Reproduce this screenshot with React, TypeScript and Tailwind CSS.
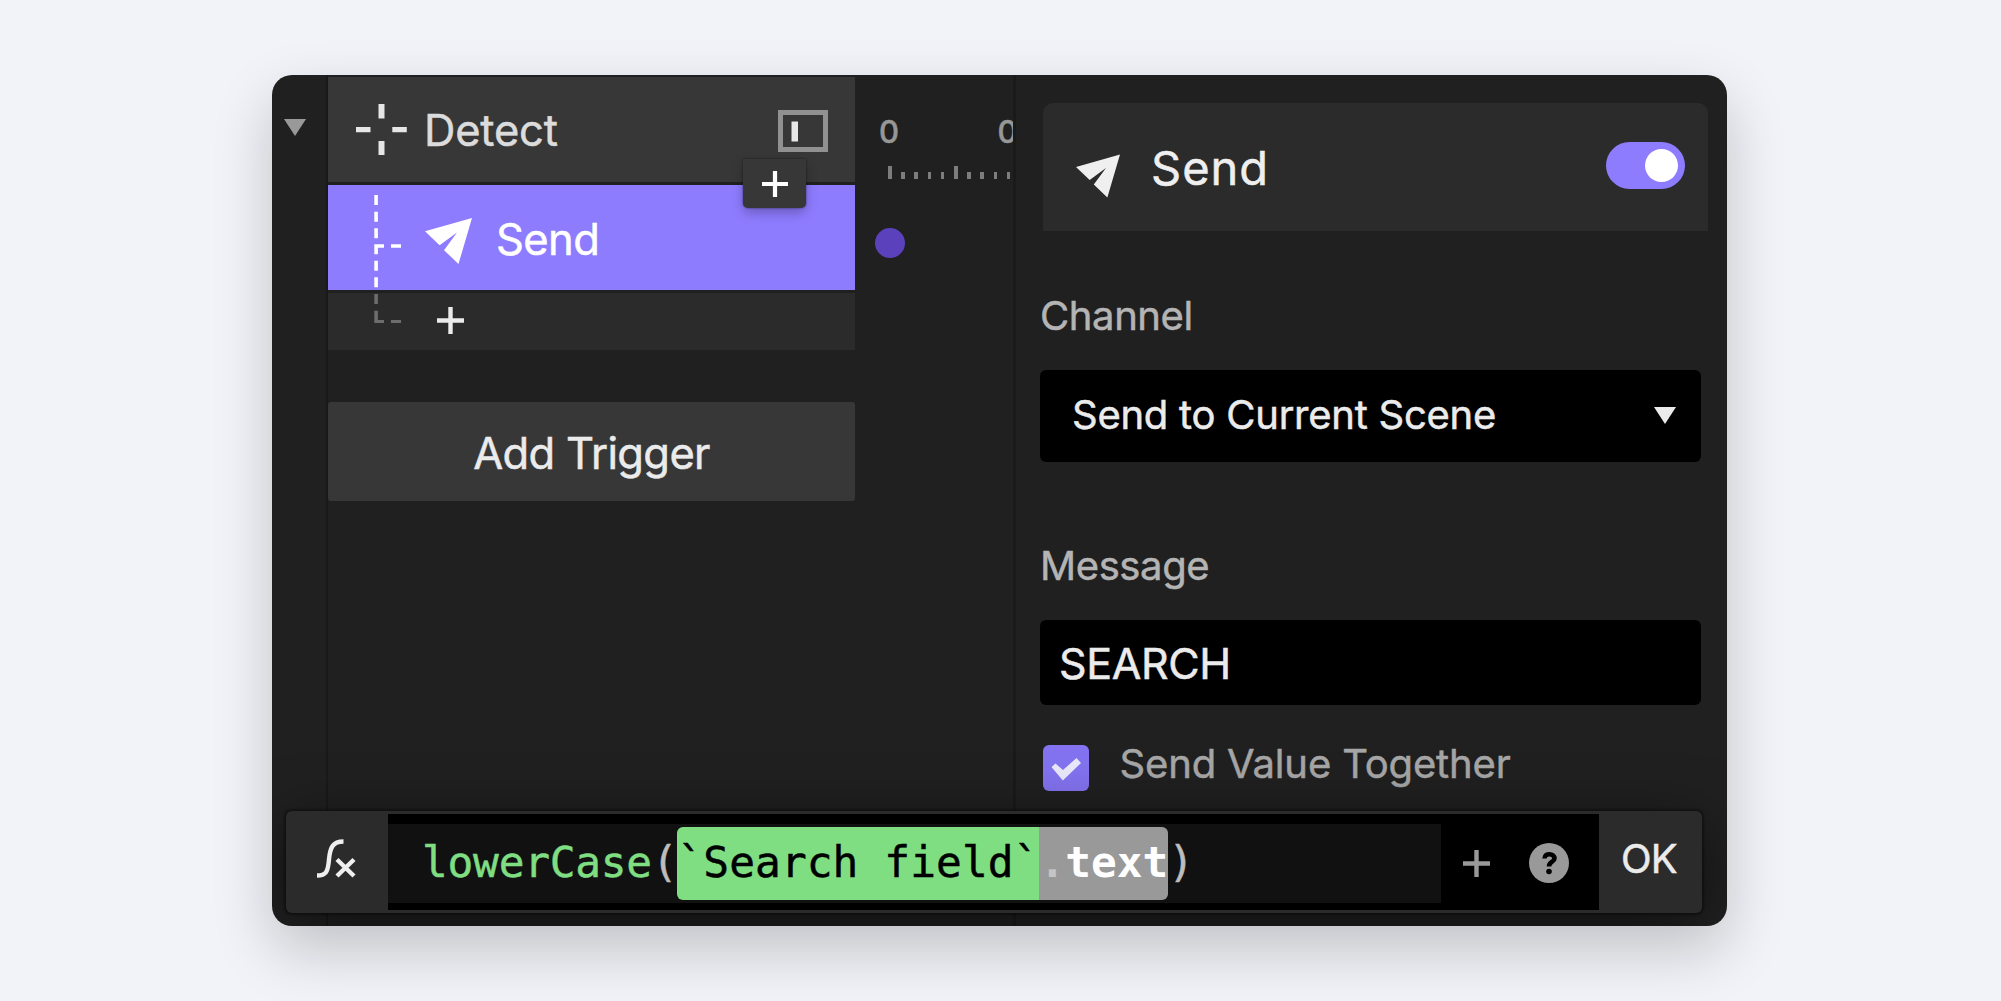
import type { ReactNode } from 'react'

const ticks = [0, 1, 2, 3, 4, 5, 6, 7, 8, 9]

function Plane({ className }: { className: string }) {
  return (
    <svg viewBox="0 0 47 46" className={className} fill="currentColor">
      <path d="M0 13.3 47 0 33.5 46 19 32.2 32 14.4 14.6 27.2Z" />
    </svg>
  )
}

function Plus({ className, width = 4.4 }: { className: string; width?: number }) {
  return (
    <svg viewBox="0 0 27 27" className={className} stroke="currentColor" strokeWidth={width}>
      <path d="M13.5 0V27M0 13.5H27" />
    </svg>
  )
}

function Caret({ className }: { className: string }) {
  return (
    <svg viewBox="0 0 22 17" className={className} fill="currentColor">
      <path d="M0 0H22L11 17Z" />
    </svg>
  )
}

function Label({ children }: { children: ReactNode }) {
  return <div className="text-[40px] leading-[40px] tracking-[-0.4px] text-[#b4b4b4]">{children}</div>
}

function Branches() {
  return (
    <svg viewBox="0 0 28 130" className="absolute left-[46px] top-[118px] w-[28px] h-[130px]">
      <path
        fill="#fff"
        d="M.3 2h3.6v10H.3zM.3 18.7h3.6v10H.3zM.3 35.3h3.6v10H.3zM.3 51.3h9.7v3.5H3.9v6.5H.3zM17 51.3h10v3.5H17zM.3 67.7h3.6v10H.3zM.3 84.3h3.6v10H.3z"
      />
      <path fill="#6d6d6d" d="M.3 101h3.6v10H.3zM.3 117.7h3.6v9.3H10v3.3H.3zM17 127h10v3.3H17z" />
    </svg>
  )
}

function Triggers() {
  return (
    <div className="relative w-[527px] pt-[2px]">
      <div className="flex h-[105px] bg-[#373737]">
        <svg viewBox="0 0 51 51" className="ml-[28px] mt-[27px] w-[51px] h-[51px]" fill="#e6e6e6">
          <path d="M22.5 0h6v14.5h-6zM22.5 37h6v14h-6zM0 23h14.5v5.3H0zM36.3 23h14.5v5.3H36.3z" />
        </svg>
        <div className="ml-[17px] mt-[32px] text-[43.5px] leading-[43.5px] tracking-[-0.2px] text-[#dcdcdc]">Detect</div>
        <svg viewBox="0 0 50 42" className="ml-auto mr-[27px] mt-[33px] w-[50px] h-[42px]">
          <rect x="2.5" y="2.5" width="45" height="37" fill="none" stroke="#919191" strokeWidth="5" />
          <rect x="13.5" y="11.5" width="6.5" height="20" fill="#e8e8e8" />
        </svg>
      </div>
      <div className="mt-[3px] flex h-[105px] bg-[#8e7cff] text-white">
        <Plane className="ml-[96.5px] mt-[33px] w-[47px] h-[46px]" />
        <div className="ml-[24.5px] mt-[33px] text-[43.5px] leading-[43.5px] tracking-[-0.6px]">Send</div>
      </div>
      <div className="mt-[3px] h-[57px] bg-[#2b2b2b] pt-[14px] pl-[109px]">
        <Plus className="w-[27px] h-[27px] text-[#ebebeb]" />
      </div>
      <div className="mt-[52px] h-[99px] rounded-[3px] bg-[#373737] pt-[30px] text-center text-[43.5px] leading-[43.5px] tracking-[-0.65px] text-[#ebebeb]">
        Add Trigger
      </div>
      <Branches />
      <div className="absolute left-[415px] top-[84px] flex h-[49px] w-[63px] items-center justify-center rounded-b-[5px] bg-[#373737] shadow-[0_0_2px_0_rgba(0,0,0,0.6),0_5px_12px_rgba(0,0,0,0.25)]">
        <Plus className="w-[26px] h-[26px] text-white" />
      </div>
    </div>
  )
}

function Timeline() {
  return (
    <div className="w-[158px] overflow-hidden">
      <div className="mt-[41px] ml-[24px] flex gap-[98.5px] text-[31px] leading-[31px] font-medium text-[#979797]">
        <span className="w-[20px]">0</span>
        <span className="w-[20px] shrink-0">0</span>
      </div>
      <div className="mt-[19px] ml-[33px] flex h-[13px] items-end gap-[9.6px]">
        {ticks.map(i => (
          <div
            key={i}
            className={i % 5 === 0 ? 'h-[13px] w-[3.6px] shrink-0 bg-[#7d7d7d]' : 'h-[7px] w-[3.6px] shrink-0 bg-[#7d7d7d]'}
          />
        ))}
      </div>
      <div className="mt-[49px] ml-[20px] size-[30px] rounded-full bg-[#5b41bb]" />
    </div>
  )
}

function Inspector() {
  return (
    <div className="flex-1 pt-[28px] pl-[24px]">
      <div className="ml-[3px] flex h-[128px] w-[665px] rounded-t-[10px] bg-[#2b2b2b] text-[#efefef]">
        <Plane className="ml-[33px] mt-[51px] w-[44px] h-[44px]" />
        <div className="ml-[31px] mt-[41px] text-[47px] leading-[47px] tracking-[1px]">Send</div>
        <div className="ml-auto mr-[23px] mt-[39px] flex h-[47px] w-[79px] items-center justify-end rounded-full bg-[#8e7cff] pr-[7px]">
          <div className="size-[33px] rounded-full bg-white" />
        </div>
      </div>
      <div className="mt-[65px]">
        <Label>Channel</Label>
      </div>
      <div className="mt-[34px] flex h-[92px] w-[661px] rounded-[6px] bg-black text-[#ebebeb]">
        <div className="ml-[32px] mt-[25px] text-[40px] leading-[40px] tracking-[-0.25px]">Send to Current Scene</div>
        <Caret className="ml-auto mr-[25px] mt-[37px] w-[22px] h-[17px]" />
      </div>
      <div className="mt-[84px]">
        <Label>Message</Label>
      </div>
      <div className="mt-[34px] h-[85px] w-[661px] rounded-[6px] bg-black pt-[22px] pl-[19px] text-[43px] leading-[43px] tracking-[-0.4px] text-[#ebebeb]">
        SEARCH
      </div>
      <div className="mt-[38px] ml-[3px] flex">
        <svg viewBox="0 0 46 46" className="mt-[2px] size-[46px] rounded-[6px] bg-[#8373f0]">
          <path d="M8.5 22 12.5 18.5 20 25 33.5 13 38 18 19.8 35.5Z" fill="#e9e9fb" />
        </svg>
        <div className="ml-[30.500px] mt-[1px] text-[40px] leading-[40px] tracking-[-0.15px] text-[#a6a6a6]">
          Send Value Together
        </div>
      </div>
    </div>
  )
}

function FormulaBar() {
  return (
    <div className="absolute left-[14px] top-[736px] flex h-[102px] w-[1416px] rounded-[6px] bg-[#2b2b2b] shadow-[0_0_2px_2px_rgba(0,0,0,0.35),0_12px_60px_rgba(0,0,0,0.5)]">
      <div className="w-[102px] pt-[28px] pl-[30px]">
        <svg viewBox="0 0 40 40" className="size-[40px]" fill="none" stroke="#efefef" strokeWidth="4.400">
          <path d="M1 36.5C10 36.5 12 33 13 20.500S17 2.500 27.500 2.500" />
          <path d="M21 20.500 38 37M38 20.500 21 37" />
        </svg>
      </div>
      <div className="my-[3px] flex h-[96px] w-[1211px] bg-black">
        <div className="mt-[10px] flex h-[79px] w-[1053px] bg-[#111] pt-[3px] pl-[34px] font-['DejaVu_Sans_Mono',monospace] text-[42.8px] leading-[71px] whitespace-pre">
          <span className="tracking-[-0.22px] text-[#7fdd82]">lowerCase</span>
          <span className="tracking-[-0.22px] text-[#bdbdbd]">(</span>
          <span className="h-[73px] rounded-l-[6px] bg-[#7fdd82] tracking-[0.09px] text-black">`Search field`</span>
          <span className="h-[73px] rounded-r-[6px] bg-[#999] font-bold text-white [-webkit-text-stroke:0px]">
            <span className="text-[#c4c4c4]">.</span>text
          </span>
          <span className="text-[#bdbdbd]">)</span>
        </div>
        <Plus className="ml-[22px] mt-[36px] w-[27px] h-[27px] text-[#999]" />
        <svg viewBox="0 0 40 40" className="ml-[39px] mt-[29px] size-[40px]">
          <circle cx="20" cy="20" r="20" fill="#999" />
          <path
            d="M15.500 15.500C15.500 9.500 25.500 10 25.500 15.500C25.500 19 20 18.500 20 23.500"
            fill="none"
            stroke="#000"
            strokeWidth="4.600"
          />
          <circle cx="20" cy="28.500" r="2.800" fill="#000" />
        </svg>
      </div>
      <div className="flex-1 pt-[28px] pr-[3px] text-center text-[40px] leading-[40px] tracking-[-0.8px] text-[#ebebeb]">
        OK
      </div>
    </div>
  )
}

export default function App() {
  return (
    <main className="h-[1001px] w-[2001px] overflow-hidden bg-[#f1f3f8] pt-[75px] pl-[272px] font-['Inter',sans-serif] [-webkit-text-stroke:0.5px]">
      <div className="w-[1455px] rounded-[20px] shadow-[0_24px_60px_rgba(0,0,0,0.2)]">
        <div className="relative flex h-[851px] overflow-hidden rounded-[20px] bg-[#202020]">
          <div className="w-[56px] border-r-2 border-[#191919] pt-[44px] pl-[12px]">
            <Caret className="w-[22px] h-[17px] text-[#999]" />
          </div>
          <Triggers />
          <Timeline />
          <div className="w-[3px] bg-[#1a1a1a]" />
          <Inspector />
          <FormulaBar />
        </div>
      </div>
    </main>
  )
}
